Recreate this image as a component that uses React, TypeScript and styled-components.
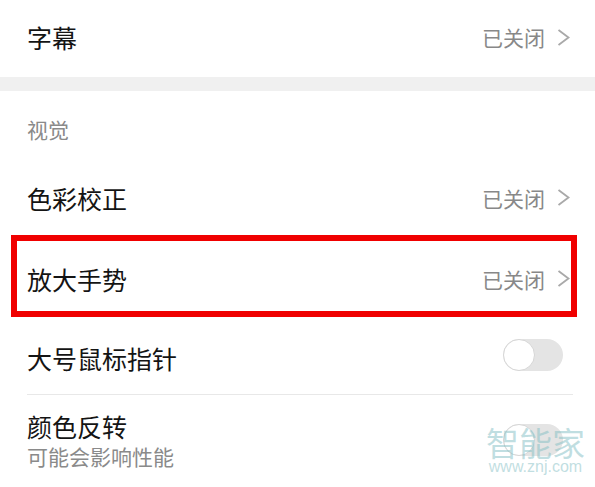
import React from "react";
import styled, { createGlobalStyle } from "styled-components";

const Global = createGlobalStyle`
  html, body { margin: 0; padding: 0; background: #ffffff; }
  body { font-family: "Noto Sans CJK SC", "Noto Sans", sans-serif; }
`;

const Page = styled.div`
  position: relative;
  width: 595px;
  height: 487px;
  overflow: hidden;
  background: #fff;
`;

const Row = styled.div<{ $h: number; $pt?: number; $pb?: number; $top?: boolean }>`
  position: relative;
  display: flex;
  align-items: ${(p) => (p.$top ? "flex-start" : "center")};
  justify-content: space-between;
  height: ${(p) => p.$h}px;
  padding: ${(p) => p.$pt ?? 0}px 25px ${(p) => p.$pb ?? 0}px 27px;
  box-sizing: border-box;
`;

const Title = styled.div`
  font-size: 25px;
  line-height: 30px;
  color: #141414;
`;

const Band = styled.div`
  height: 14px;
  background: #f0f0f0;
`;

const Header = styled.div`
  height: 67px;
  padding: 26px 0 0 27px;
  box-sizing: border-box;
  font-size: 21px;
  line-height: 24px;
  color: #8a8a8a;
`;

const Value = styled.div`
  display: flex;
  align-items: center;
  gap: 12px;
  font-size: 21px;
  line-height: 26px;
  color: #888;
`;

const Chevron = () => (
  <svg width="13" height="17" viewBox="0 0 13 17">
    <polyline
      points="1.5,1 11.5,8.5 1.5,16"
      fill="none"
      stroke="#a9a9a9"
      strokeWidth="1.8"
      strokeLinejoin="miter"
    />
  </svg>
);

const Highlight = styled.div`
  position: absolute;
  left: 11px;
  right: 18px;
  top: -4px;
  bottom: 3px;
  border: 6px solid #f00000;
  pointer-events: none;
`;

const Toggle = styled.div<{ $shift: number }>`
  position: relative;
  width: 60px;
  height: 32px;
  margin-right: 7px;
  border-radius: 16px;
  background: #e4e4e4;
  transform: translateY(${(p) => p.$shift}px);
  &::after {
    content: "";
    position: absolute;
    left: 0;
    top: 0;
    width: 30px;
    height: 30px;
    border-radius: 50%;
    background: #fff;
    border: 1px solid #d6d6d6;
  }
`;

const Divider = styled.div`
  height: 1px;
  margin: 0 22px 0 27px;
  background: #e8e8e8;
`;

const TwoLine = styled.div`
  display: flex;
  flex-direction: column;
  gap: 2px;
`;

const Sub = styled.div`
  font-size: 21px;
  line-height: 26px;
  color: #8a8a8a;
`;

const Watermark = styled.div`
  position: absolute;
  right: 10px;
  bottom: 12px;
  display: flex;
  flex-direction: column;
  align-items: center;
  color: rgba(130, 190, 195, 0.5);
  pointer-events: none;
`;

const WmBig = styled.div`
  font-size: 33px;
  line-height: 34px;
`;

const WmSmall = styled.div`
  font-family: "Liberation Sans", sans-serif;
  font-size: 16px;
  line-height: 16px;
`;

export default function App() {
  return (
    <>
      <Global />
      <Page>
        <Row $h={77} $pb={3}>
          <Title>字幕</Title>
          <Value>
            已关闭
            <Chevron />
          </Value>
        </Row>
        <Band />
        <Header>视觉</Header>
        <Row $h={81} $pb={2}>
          <Title>色彩校正</Title>
          <Value>
            已关闭
            <Chevron />
          </Value>
        </Row>
        <Row $h={81} $pb={2}>
          <Title>放大手势</Title>
          <Value>
            已关闭
            <Chevron />
          </Value>
          <Highlight />
        </Row>
        <Row $h={74} $pt={2}>
          <Title>大号鼠标指针</Title>
          <Toggle $shift={-3} />
        </Row>
        <Divider />
        <Row $h={92} $pt={16} $top>
          <TwoLine>
            <Title>颜色反转</Title>
            <Sub>可能会影响性能</Sub>
          </TwoLine>
          <Toggle $shift={13} />
        </Row>
        <Watermark>
          <WmBig>智能家</WmBig>
          <WmSmall>www.znj.com</WmSmall>
        </Watermark>
      </Page>
    </>
  );
}
